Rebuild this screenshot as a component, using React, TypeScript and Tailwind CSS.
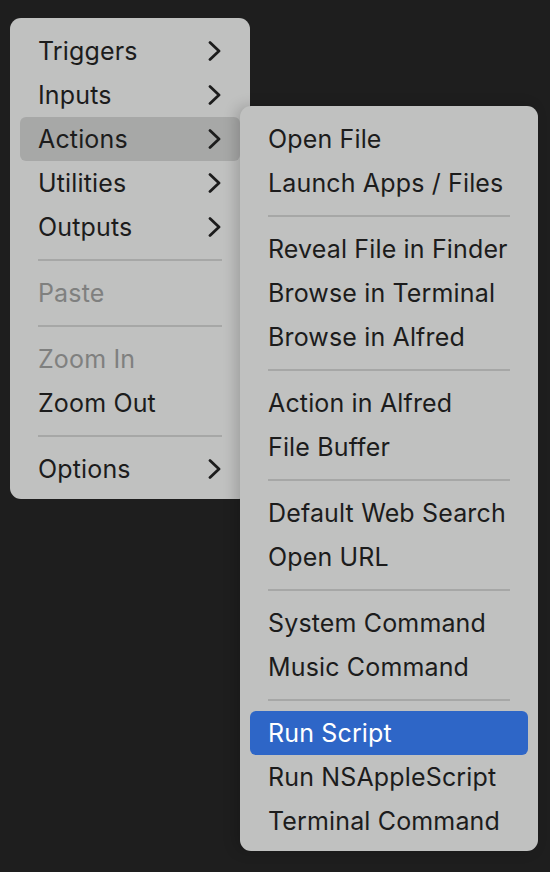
import React from "react";

type Item =
  | { kind: "item"; label: string; sub?: boolean; disabled?: boolean; active?: boolean; selected?: boolean }
  | { kind: "sep" };

const mainMenu: Item[] = [
  { kind: "item", label: "Triggers", sub: true },
  { kind: "item", label: "Inputs", sub: true },
  { kind: "item", label: "Actions", sub: true, active: true },
  { kind: "item", label: "Utilities", sub: true },
  { kind: "item", label: "Outputs", sub: true },
  { kind: "sep" },
  { kind: "item", label: "Paste", disabled: true },
  { kind: "sep" },
  { kind: "item", label: "Zoom In", disabled: true },
  { kind: "item", label: "Zoom Out" },
  { kind: "sep" },
  { kind: "item", label: "Options", sub: true },
];

const actionsMenu: Item[] = [
  { kind: "item", label: "Open File" },
  { kind: "item", label: "Launch Apps / Files" },
  { kind: "sep" },
  { kind: "item", label: "Reveal File in Finder" },
  { kind: "item", label: "Browse in Terminal" },
  { kind: "item", label: "Browse in Alfred" },
  { kind: "sep" },
  { kind: "item", label: "Action in Alfred" },
  { kind: "item", label: "File Buffer" },
  { kind: "sep" },
  { kind: "item", label: "Default Web Search" },
  { kind: "item", label: "Open URL" },
  { kind: "sep" },
  { kind: "item", label: "System Command" },
  { kind: "item", label: "Music Command" },
  { kind: "sep" },
  { kind: "item", label: "Run Script", selected: true },
  { kind: "item", label: "Run NSAppleScript" },
  { kind: "item", label: "Terminal Command" },
];

function Chevron() {
  return (
    <svg width="14" height="20" viewBox="0 0 14 20" fill="none" className="shrink-0">
      <path d="M2 1.6 L11 10 L2 18.4" stroke="#1c1c1c" strokeWidth="2.8" strokeLinecap="round" strokeLinejoin="round" />
    </svg>
  );
}

function MenuList({ items }: { items: Item[] }) {
  return (
    <div className="flex flex-col">
      {items.map((it, i) => {
        if (it.kind === "sep") {
          return (
            <div key={i} className="h-[22px] flex items-center pl-[18px] pr-[18px]">
              <div className="h-[2px] w-full bg-[#a6a7a6]" />
            </div>
          );
        }
        const bg = it.selected ? "bg-[#2e66c7] text-white" : it.active ? "bg-[#a7a8a7] text-[#1c1c1c]" : "text-[#1c1c1c]";
        return (
          <div key={i} className={`h-[44px] rounded-[6px] flex items-center justify-between pl-[18px] pr-[18px] ${bg}`}>
            <span className={`text-[25px] leading-none tracking-[0.15px] ${it.disabled ? "text-[#7f807f]" : ""}`}>{it.label}</span>
            {it.sub && <Chevron />}
          </div>
        );
      })}
    </div>
  );
}

export default function App() {
  return (
    <div className="min-h-screen bg-[#1e1e1e] relative overflow-hidden" style={{ fontFamily: "Inter, 'Noto Sans', sans-serif" }}>
      <div className="absolute left-[10px] top-[18px] w-[240px] bg-[#c0c1c0] rounded-[11px] pt-[11px] pb-[8px] px-[10px]">
        <MenuList items={mainMenu} />
      </div>
      <div className="absolute left-[240px] top-[106px] w-[298px] bg-[#c0c1c0] rounded-[11px] pt-[11px] pb-[8px] px-[10px] shadow-[-4px_0_14px_rgba(0,0,0,0.18)]">
        <MenuList items={actionsMenu} />
      </div>
    </div>
  );
}
